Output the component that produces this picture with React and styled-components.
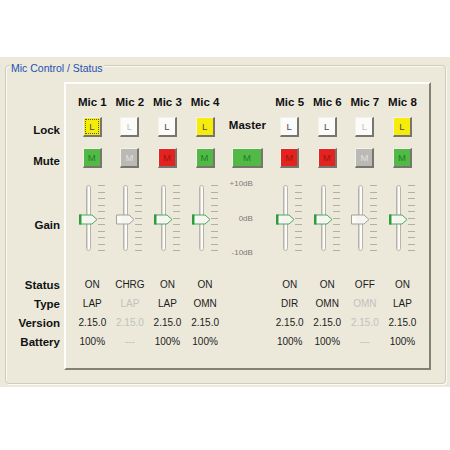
import React from "react";
import styled, { createGlobalStyle } from "styled-components";

const Global = createGlobalStyle`
  html, body { margin: 0; padding: 0; background: #ffffff; }
  body { width: 450px; height: 450px; overflow: hidden; font-family: "Liberation Sans", Arial, sans-serif; }
`;

const BEIGE = "#ece9db";

const Stage = styled.div`
  margin-top: 57px;
  height: 330px;
  background: ${BEIGE};
  padding-top: 8px;
  box-sizing: border-box;
`;

const GroupBox = styled.div`
  position: relative;
  margin-left: 5px;
  width: 441px;
  height: 319px;
  box-sizing: border-box;
  border: 1px solid #cfcbbd;
  border-radius: 4px;
  box-shadow: 1px 1px 0 #faf9f3, inset 1px 1px 0 #faf9f3;
  padding-top: 16px;
  display: flex;
  gap: 4px;
`;

const Legend = styled.div`
  position: absolute;
  top: -5px;
  left: 4px;
  padding: 0 1px;
  background: ${BEIGE};
  color: #2350b4;
  font-size: 10.5px;
  line-height: 14px;
`;

const ROWS = "20px 30px 32px 101px 19px 19px 19px 19px";

const LabelCol = styled.div`
  width: 54px;
  padding-top: 10px;
  display: grid;
  grid-template-rows: ${ROWS};
  align-self: flex-start;
`;

const RowLabel = styled.div`
  display: flex;
  align-items: center;
  justify-content: flex-end;
  font-weight: bold;
  font-size: 11.5px;
  color: #111;
  padding-top: ${(p) => p.$shift || 0}px;
`;

const Panel = styled.div`
  width: 367px;
  height: 288px;
  box-sizing: border-box;
  border-top: 2px solid #fdfdfb;
  border-left: 2px solid #fdfdfb;
  border-right: 2px solid #838176;
  border-bottom: 2px solid #838176;
  padding: 8px 0 0 7.5px;
  display: grid;
  grid-template-columns: repeat(4, 37.6px) 47px repeat(4, 37.6px);
  grid-template-rows: ${ROWS};
`;

const Header = styled.div`
  display: flex;
  align-items: center;
  justify-content: center;
  font-weight: bold;
  font-size: 11.5px;
  color: #111;
  white-space: nowrap;
`;

const Cell = styled.div`
  display: flex;
  align-items: center;
  justify-content: center;
`;

const MasterLabel = styled(Cell)`
  font-weight: bold;
  font-size: 11.5px;
  color: #111;
  padding-bottom: 4px;
`;

const FACE = {
  yellow: "#f6ec0c",
  white: "#fbfbf9",
  green: "#52b947",
  red: "#e42320",
  gray: "#bab9b6",
};

const Btn = styled.div`
  width: ${(p) => (p.$wide ? 31 : 19)}px;
  height: 20px;
  box-sizing: border-box;
  background: ${(p) => FACE[p.$face]};
  border-top: 1px solid #f2f1ea;
  border-left: 1px solid #f2f1ea;
  border-right: 2px solid #77766e;
  border-bottom: 2px solid #77766e;
  display: flex;
  align-items: center;
  justify-content: center;
  font-size: 9.5px;
  color: ${(p) => p.$ink};
  padding: 1px;
`;

const Focus = styled.div`
  flex: 1;
  align-self: stretch;
  border: 1px dotted #555;
  display: flex;
  align-items: center;
  justify-content: center;
`;

const GainCell = styled.div`
  display: flex;
  justify-content: center;
  align-items: flex-start;
  padding-top: 9px;
  padding-right: 1px;
`;

const DbScale = styled.div`
  display: flex;
  flex-direction: column;
  justify-content: space-between;
  align-items: flex-end;
  height: 78px;
  margin-top: 5px;
  padding-right: 18px;
  font-size: 8px;
  color: #7d7c74;
`;

const Value = styled.div`
  display: flex;
  align-items: center;
  justify-content: center;
  font-size: 10px;
  color: ${(p) => (p.$dim ? "#c2c1bb" : "#1c1c1c")};
  white-space: nowrap;
`;

const mics = [
  { name: "Mic 1", lock: "yellow", focus: true, mute: "green", status: "ON", type: "LAP", version: "2.15.0", battery: "100%" },
  { name: "Mic 2", lock: "white", off: true, mute: "gray", status: "CHRG", type: "LAP", version: "2.15.0", battery: "---" },
  { name: "Mic 3", lock: "white", mute: "red", status: "ON", type: "LAP", version: "2.15.0", battery: "100%" },
  { name: "Mic 4", lock: "yellow", mute: "green", status: "ON", type: "OMN", version: "2.15.0", battery: "100%" },
  { name: "Mic 5", lock: "white", mute: "red", status: "ON", type: "DIR", version: "2.15.0", battery: "100%" },
  { name: "Mic 6", lock: "white", mute: "red", status: "ON", type: "OMN", version: "2.15.0", battery: "100%" },
  { name: "Mic 7", lock: "white", off: true, mute: "gray", status: "OFF", type: "OMN", version: "2.15.0", battery: "---" },
  { name: "Mic 8", lock: "yellow", mute: "green", status: "ON", type: "LAP", version: "2.15.0", battery: "100%" },
];

const MUTE_INK = { green: "#1d7f26", red: "#9c1512", gray: "#e2e1dc" };

function Slider({ active }) {
  const ticks = Array.from({ length: 11 }, (_, i) => Math.round(2 + i * 6.5) + 0.5);
  const edge = active ? "#4ea85c" : "#a3a19a";
  return (
    <svg width="30" height="70" viewBox="0 0 30 70">
      <rect x="9.5" y="2.5" width="4" height="65" rx="2" fill="#fbfbf8" stroke="#b6b4aa" />
      <line x1="10.5" y1="4" x2="10.5" y2="66" stroke="#d9d7cf" />
      {ticks.map((y) => (
        <line key={y} x1="21" x2="28" y1={y} y2={y} stroke="#b2b0a6" />
      ))}
      <path d="M2.5 32 H15 L20 36.5 L15 41 H2.5 Z" fill="#f5f5f1" stroke={edge} />
      <path d="M3 33 H7 V40 H3 Z" fill="#fafaf7" />
      {active && <rect x="2" y="31.5" width="2.5" height="10" fill="#2e9c3e" />}
    </svg>
  );
}

function withMaster(render, master) {
  const cells = mics.map(render);
  return [...cells.slice(0, 4), master, ...cells.slice(4)];
}

export default function App() {
  return (
    <>
      <Global />
      <Stage>
        <GroupBox>
          <Legend>Mic Control / Status</Legend>
          <LabelCol>
            <div />
            <RowLabel $shift={5}>Lock</RowLabel>
            <RowLabel $shift={6}>Mute</RowLabel>
            <RowLabel>Gain</RowLabel>
            <RowLabel>Status</RowLabel>
            <RowLabel>Type</RowLabel>
            <RowLabel>Version</RowLabel>
            <RowLabel>Battery</RowLabel>
          </LabelCol>
          <Panel>
            {withMaster((m) => <Header key={m.name}>{m.name}</Header>, <div key="mh" />)}
            {withMaster(
              (m) => (
                <Cell key={m.name + "l"}>
                  <Btn $face={m.lock} $ink={m.off ? "#c4c3bd" : "#4a4a44"}>
                    {m.focus ? <Focus>L</Focus> : "L"}
                  </Btn>
                </Cell>
              ),
              <MasterLabel key="ml">Master</MasterLabel>
            )}
            {withMaster(
              (m) => (
                <Cell key={m.name + "m"}>
                  <Btn $face={m.mute} $ink={MUTE_INK[m.mute]}>M</Btn>
                </Cell>
              ),
              <Cell key="mm">
                <Btn $wide $face="green" $ink={MUTE_INK.green}>M</Btn>
              </Cell>
            )}
            {withMaster(
              (m) => (
                <GainCell key={m.name + "g"}>
                  <Slider active={!m.off} />
                </GainCell>
              ),
              <DbScale key="mg">
                <span>+10dB</span>
                <span>0dB</span>
                <span>-10dB</span>
              </DbScale>
            )}
            {withMaster((m) => <Value key={m.name + "s"}>{m.status}</Value>, <div key="ms" />)}
            {withMaster((m) => <Value key={m.name + "t"} $dim={m.off}>{m.type}</Value>, <div key="mt" />)}
            {withMaster((m) => <Value key={m.name + "v"} $dim={m.off}>{m.version}</Value>, <div key="mv" />)}
            {withMaster((m) => <Value key={m.name + "b"} $dim={m.off}>{m.battery}</Value>, <div key="mb" />)}
          </Panel>
        </GroupBox>
      </Stage>
    </>
  );
}
